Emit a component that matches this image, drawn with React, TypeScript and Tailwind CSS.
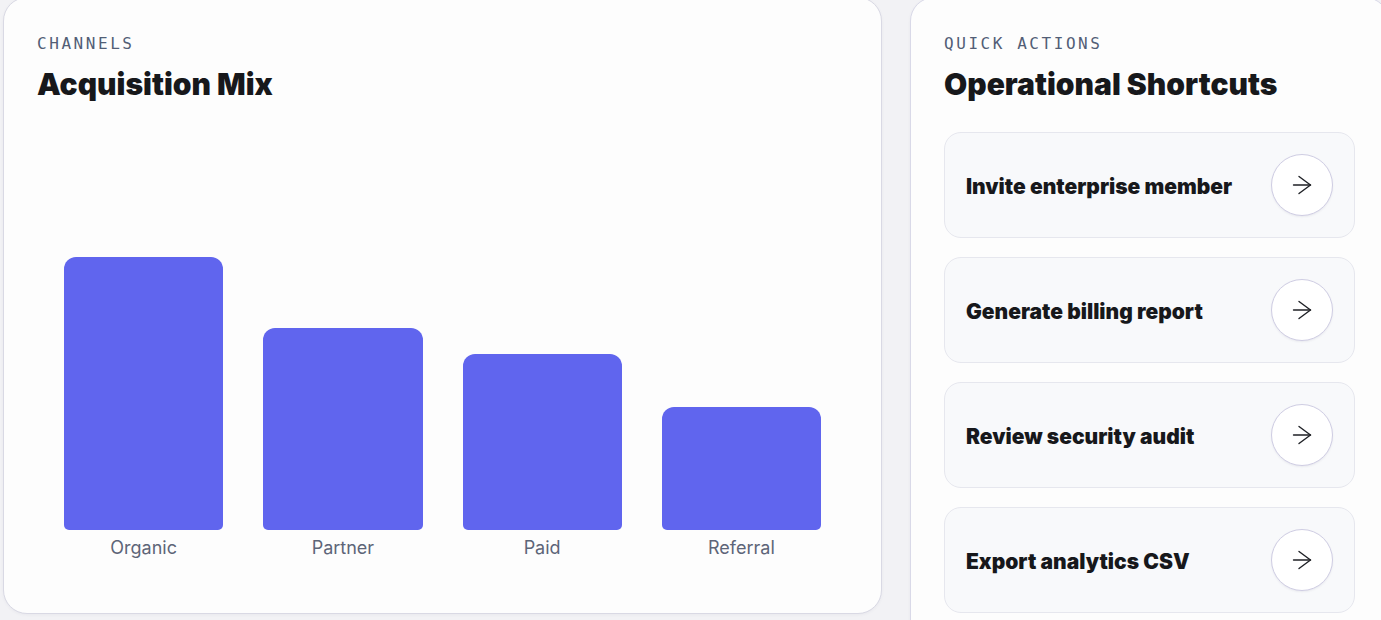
import React from 'react';

type Channel = { name: string; value: number };

const CHANNELS: Channel[] = [
  { name: 'Organic', value: 272 },
  { name: 'Partner', value: 201 },
  { name: 'Paid', value: 175 },
  { name: 'Referral', value: 123 },
];

const ACTIONS = [
  'Invite enterprise member',
  'Generate billing report',
  'Review security audit',
  'Export analytics CSV',
];

const MAX_BAR = 272;

const ArrowIcon: React.FC = () => (
  <svg width="20" height="20" viewBox="0 0 20 20" fill="none" stroke="#1f2126" strokeWidth="1.4" strokeLinecap="round" strokeLinejoin="round">
    <path d="M1.5 10h17" />
    <path d="M7 1.5L18.5 10 7 18.5" />
  </svg>
);

const App: React.FC = () => {
  return (
    <div className="w-[1381px] h-[620px] overflow-hidden bg-[#f2f2f5] font-['Inter',sans-serif]">
      <div className="flex gap-[28px] pl-[3px] -mt-[3px] w-[1400px]">
        {/* Channels card */}
        <div className="w-[879px] h-[617px] shrink-0 rounded-[24px] border border-[#d9d9e4] bg-[#fdfdfd] p-[33px] flex flex-col shadow-[0_1px_3px_rgba(80,80,120,0.06)]">
          <p className="mt-px font-['DejaVu_Sans_Mono',monospace] text-[16px] leading-6 tracking-[0.16em] text-[#525e76] uppercase">
            Channels
          </p>
          <h2 className="mt-[10px] text-[30px] leading-9 font-black text-[#17181b]">
            Acquisition Mix
          </h2>

          <div className="grid grid-cols-4 gap-10 px-[27px] mt-auto mb-[20px] items-end">
            {CHANNELS.map(c => (
              <div key={c.name} className="flex flex-col items-center">
                <div
                  className="w-full bg-[#6065ee] rounded-t-[12px] rounded-b-[5px]"
                  style={{ height: `${(c.value / MAX_BAR) * 273}px` }}
                />
                <span className="mt-[6px] text-lg leading-6 text-[#5d6578]">{c.name}</span>
              </div>
            ))}
          </div>
        </div>

        {/* Quick actions card */}
        <div className="w-[479px] h-[700px] shrink-0 rounded-[24px] border border-[#d9d9e8] bg-[#fdfdfd] p-[33px] shadow-[0_1px_3px_rgba(80,80,120,0.06)]">
          <p className="mt-px font-['DejaVu_Sans_Mono',monospace] text-[16px] leading-6 tracking-[0.16em] text-[#525e76] uppercase">
            Quick Actions
          </p>
          <h2 className="mt-[10px] text-[30px] leading-9 font-black text-[#17181b]">
            Operational Shortcuts
          </h2>

          <div className="mt-[30px] flex flex-col gap-[19px]">
            {ACTIONS.map(action => (
              <div
                key={action}
                className="h-[106px] flex items-center justify-between rounded-[17px] border border-[#e6e7ee] bg-[#f8f9fb] px-[21px]"
              >
                <span className="pt-[3px] text-[21px] leading-7 font-black text-[#17181b]">{action}</span>
                <button className="w-[62px] h-[62px] rounded-full border border-[#cfcde3] bg-white flex items-center justify-center shadow-[0_1px_2px_rgba(60,60,100,0.08)]">
                  <ArrowIcon />
                </button>
              </div>
            ))}
          </div>
        </div>
      </div>
    </div>
  );
};

export default App;
